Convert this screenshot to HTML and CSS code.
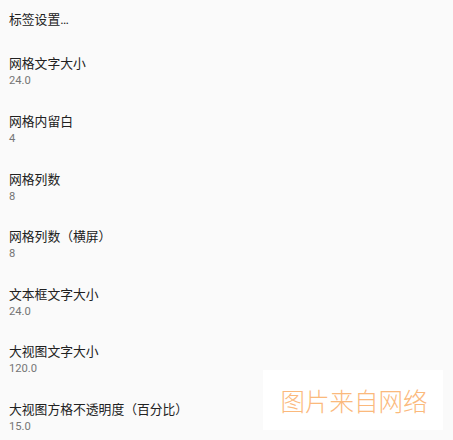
FILE: index.html
```html
<!DOCTYPE html>
<html lang="zh-CN">
<head>
<meta charset="utf-8">
<link rel="stylesheet" href="styles.css">
</head>
<body>
<div class="list">
  <div class="row single"><div class="title">标签设置…</div></div>
  <div class="row"><div class="title">网格文字大小</div><div class="summary">24.0</div></div>
  <div class="row"><div class="title">网格内留白</div><div class="summary">4</div></div>
  <div class="row"><div class="title">网格列数</div><div class="summary">8</div></div>
  <div class="row"><div class="title">网格列数（横屏）</div><div class="summary">8</div></div>
  <div class="row"><div class="title">文本框文字大小</div><div class="summary">24.0</div></div>
  <div class="row"><div class="title">大视图文字大小</div><div class="summary">120.0</div></div>
  <div class="row"><div class="title">大视图方格不透明度（百分比）</div><div class="summary">15.0</div></div>
</div>
<div class="watermark">图片来自网络</div>
</body>
</html>
```
FILE: styles.css
```css
html, body {
  margin: 0;
  padding: 0;
  background: #fafafa;
  overflow: hidden;
}
body {
  width: 453px;
  height: 440px;
  position: relative;
  font-family: Roboto, "Noto Sans CJK SC", sans-serif;
}
.list {
  display: flex;
  flex-direction: column;
}
.row {
  height: 57.6px;
  box-sizing: border-box;
  padding: 2px 9px 0;
  display: flex;
  flex-direction: column;
  justify-content: center;
}
.row.single {
  height: 42.6px;
  padding: 0 9px 4px;
}
.title {
  font-size: 12.8px;
  line-height: 17px;
  color: #212121;
  white-space: nowrap;
}
.summary {
  font-size: 11.2px;
  line-height: 16px;
  margin-top: 1px;
  color: #757575;
}
.watermark {
  position: absolute;
  left: 263px;
  top: 370px;
  width: 180px;
  height: 60px;
  background: #ffffff;
  color: #fbb97c;
  font-family: "Noto Sans CJK SC", sans-serif;
  font-weight: 300;
  font-size: 24.5px;
  display: flex;
  align-items: center;
  justify-content: center;
  padding-left: 2px;
  box-sizing: border-box;
}
```
